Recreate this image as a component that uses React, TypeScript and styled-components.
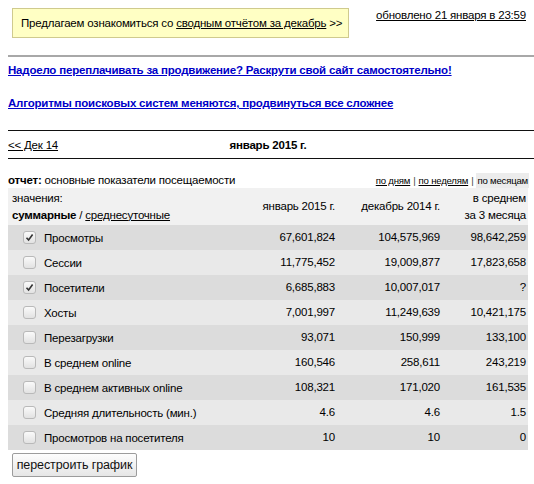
import React from "react";
import styled, { createGlobalStyle } from "styled-components";

const GlobalStyle = createGlobalStyle`
  html { margin: 0; padding: 0; background: #fff; overflow: hidden; }
  body {
    margin: 8px 0 0 8px;
    padding: 0;
    font-family: "Liberation Sans", Arial, sans-serif;
    font-size: 11.5px;
    letter-spacing: -0.2px;
    color: #000;
  }
  a { color: inherit; }
`;

const Page = styled.div`
  display: flex;
  flex-direction: column;
  width: 520px;
`;

const TopBar = styled.div`
  display: flex;
  justify-content: space-between;
  align-items: flex-start;
  height: 30px;
`;

const Notice = styled.div`
  margin-left: 4px;
  width: 337px;
  height: 30px;
  box-sizing: border-box;
  background: #ffffc4;
  border: 1px solid #cfca8e;
  display: flex;
  align-items: center;
  padding-left: 8px;
  white-space: nowrap;
`;

const PlainLink = styled.a`
  color: #000;
  text-decoration: underline;
`;

const Updated = styled.a`
  margin-top: 1px;
  margin-right: 2px;
  color: #000;
  text-decoration: underline;
  white-space: nowrap;
`;

const Rule = styled.div<{ $tone: "grey" | "black"; $top: number }>`
  margin-top: ${(p) => p.$top}px;
  width: calc(100% + 6px);
  height: ${(p) => (p.$tone === "grey" ? 2 : 1)}px;
  background: ${(p) => (p.$tone === "grey" ? "#a8a8a8" : "#111")};
`;

const Promo = styled.a<{ $top: number }>`
  display: block;
  margin-top: ${(p) => p.$top}px;
  line-height: 14px;
  font-weight: bold;
  color: #0000c8;
  text-decoration: underline;
  white-space: nowrap;
`;

const MonthNav = styled.div`
  display: grid;
  grid-template-columns: 1fr auto 1fr;
  align-items: center;
  height: 27px;
`;

const MonthTitle = styled.b`
  font-size: 11.5px;
`;

const ReportLine = styled.div`
  display: flex;
  justify-content: space-between;
  align-items: center;
  margin-top: 13px;
  height: 16px;
`;

const Periods = styled.div`
  display: flex;
  align-items: center;
  font-size: 9.6px;
  letter-spacing: -0.2px;
  margin-right: -1px;
`;

const Sep = styled.span`
  padding: 0 3px;
  color: #444;
`;

const Current = styled.span`
  background: #ececec;
  padding: 2px 1px;
`;

const Table = styled.div`
  display: flex;
  flex-direction: column;
`;

const Row = styled.div<{ $bg: string; $h: number }>`
  display: grid;
  grid-template-columns: 234px 95px 105px 86px;
  align-items: center;
  height: ${(p) => p.$h}px;
  background: ${(p) => p.$bg};
`;

const HeadLabel = styled.div`
  padding-left: 4px;
  line-height: 17px;
`;

const NumCell = styled.div`
  text-align: right;
  padding-right: 2px;
  line-height: 17px;
  white-space: nowrap;
`;

const LabelCell = styled.label`
  display: flex;
  align-items: center;
  padding-left: 15px;
  gap: 8px;
  white-space: nowrap;
`;

const Box = styled.span`
  width: 11px;
  height: 11px;
  border: 1px solid #b9b9b9;
  border-radius: 3px;
  background: linear-gradient(#fafafa, #e2e2e2);
  display: flex;
  align-items: center;
  justify-content: center;
`;

const Button = styled.button`
  margin-top: 3px;
  margin-left: 4px;
  align-self: flex-start;
  width: 125px;
  height: 24px;
  font-family: "Liberation Sans", Arial, sans-serif;
  font-size: 12.5px;
  letter-spacing: -0.1px;
  color: #111;
  background: linear-gradient(#fdfdfd, #e6e6e6);
  border: 1px solid #9c9c9c;
  border-radius: 2px;
  padding: 0;
`;

type Item = { label: string; a: string; b: string; c: string; checked?: boolean };

const items: Item[] = [
  { label: "Просмотры", a: "67,601,824", b: "104,575,969", c: "98,642,259", checked: true },
  { label: "Сессии", a: "11,775,452", b: "19,009,877", c: "17,823,658" },
  { label: "Посетители", a: "6,685,883", b: "10,007,017", c: "?", checked: true },
  { label: "Хосты", a: "7,001,997", b: "11,249,639", c: "10,421,175" },
  { label: "Перезагрузки", a: "93,071", b: "150,999", c: "133,100" },
  { label: "В среднем online", a: "160,546", b: "258,611", c: "243,219" },
  { label: "В среднем активных online", a: "108,321", b: "171,020", c: "161,535" },
  { label: "Средняя длительность (мин.)", a: "4.6", b: "4.6", c: "1.5" },
  { label: "Просмотров на посетителя", a: "10", b: "10", c: "0" },
];

const Check = ({ on }: { on?: boolean }) => (
  <Box>
    {on && (
      <svg width="9" height="9" viewBox="0 0 9 9">
        <path d="M1.5 4.8 L3.6 7 L7.6 1.6" stroke="#333" strokeWidth="1.6" fill="none" />
      </svg>
    )}
  </Box>
);

export default function App() {
  return (
    <>
      <GlobalStyle />
      <Page>
        <TopBar>
          <Notice>
            Предлагаем ознакомиться со&nbsp;<PlainLink href="#">сводным отчётом за декабрь</PlainLink>&nbsp;&gt;&gt;
          </Notice>
          <Updated href="#">обновлено 21 января в 23:59</Updated>
        </TopBar>
        <Rule $tone="grey" $top={17} />
        <Promo href="#" $top={6}>
          Надоело переплачивать за продвижение? Раскрути свой сайт самостоятельно!
        </Promo>
        <Promo href="#" $top={19}>
          Алгоритмы поисковых систем меняются, продвинуться все сложнее
        </Promo>
        <Rule $tone="black" $top={20} />
        <MonthNav>
          <PlainLink href="#" style={{ justifySelf: "start" }}>&lt;&lt; Дек 14</PlainLink>
          <MonthTitle>январь 2015 г.</MonthTitle>
          <span />
        </MonthNav>
        <Rule $tone="black" $top={0} />
        <ReportLine>
          <span>
            <b>отчет:</b> основные показатели посещаемости
          </span>
          <Periods>
            <PlainLink href="#">по дням</PlainLink>
            <Sep>|</Sep>
            <PlainLink href="#">по неделям</PlainLink>
            <Sep>|</Sep>
            <Current>по месяцам</Current>
          </Periods>
        </ReportLine>
        <Table>
          <Row $bg="#f1f1f1" $h={37}>
            <HeadLabel>
              значения:
              <br />
              <b>суммарные</b> / <PlainLink href="#">среднесуточные</PlainLink>
            </HeadLabel>
            <NumCell>январь 2015 г.</NumCell>
            <NumCell>декабрь 2014 г.</NumCell>
            <NumCell>
              в среднем
              <br />
              за 3 месяца
            </NumCell>
          </Row>
          {items.map((it, i) => (
            <Row key={it.label} $bg={i % 2 === 0 ? "#dcdcdc" : "#e9e9e9"} $h={25}>
              <LabelCell>
                <Check on={it.checked} />
                {it.label}
              </LabelCell>
              <NumCell>{it.a}</NumCell>
              <NumCell>{it.b}</NumCell>
              <NumCell>{it.c}</NumCell>
            </Row>
          ))}
        </Table>
        <Button>перестроить график</Button>
      </Page>
    </>
  );
}
